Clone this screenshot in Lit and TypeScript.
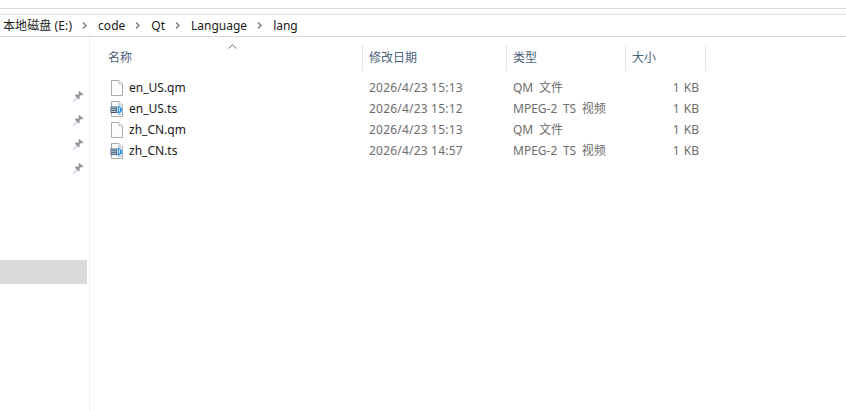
import { LitElement, html, css, unsafeCSS } from "lit";
import { customElement } from "lit/decorators.js";

const FONT = `"Noto Sans", "Noto Sans CJK SC", sans-serif`;

const chevron = html`<svg class="chev" width="5" height="7" viewBox="0 0 5 7"><path d="M1 0.5 L4 3.5 L1 6.5" fill="none" stroke="#7d7d7d" stroke-width="1.4"/></svg>`;

const pin = html`<svg class="pin" width="11" height="12" viewBox="0 0 11 12"><path d="M0.5 11.5 L4 7.5" stroke="#9aa3ab" stroke-width="1" fill="none"/><path d="M6.2 0.8 L10.4 4.6 L9 5.4 L7.8 5.1 L6.4 7 L6.6 8.8 L5.6 9.4 L1.8 5.6 L2.6 4.6 L4.4 4.8 L6 3.2 L5.6 2 Z" fill="#8e99a3"/></svg>`;

const fileIcon = html`<svg class="ficon" width="16" height="16" viewBox="0 0 16 16"><path d="M2.5 0.5 H10 L13.5 4 V15.5 H2.5 Z" fill="#fcfcfc" stroke="#ababab"/><path d="M10 0.5 V4 H13.5" fill="#f2f2f2" stroke="#c0c0c0"/></svg>`;

const videoIcon = html`<svg class="ficon" width="16" height="16" viewBox="0 0 16 16"><path d="M2.5 0.5 H10 L13.5 4 V15.5 H2.5 Z" fill="#fcfcfc" stroke="#ababab"/><path d="M10 0.5 V4 H13.5" fill="#f2f2f2" stroke="#c0c0c0"/><rect x="1.5" y="5.5" width="6.5" height="6.5" fill="#3f5b78"/><path d="M2.2 6.9 H7.4 M2.2 8.7 H7.4 M2.2 10.5 H7.4" stroke="#d5dfe8" stroke-width="0.8"/><path d="M8.6 4.2 L11.4 5.8 C13 7 13.4 9 12.6 10.6 C12 11.8 10.4 12.8 8.4 12.6 L8.8 8 Z" fill="#2a93e2"/><path d="M10.4 6.6 L10.4 10.4" stroke="#e8f4fd" stroke-width="1"/><path d="M9 13.5 H12.5" stroke="#9cc9ee" stroke-width="1"/></svg>`;

const files = [
  { name: "en_US.qm", date: "2026/4/23 15:13", type: "QM 文件", video: false },
  { name: "en_US.ts", date: "2026/4/23 15:12", type: "MPEG-2 TS 视频", video: true },
  { name: "zh_CN.qm", date: "2026/4/23 15:13", type: "QM 文件", video: false },
  { name: "zh_CN.ts", date: "2026/4/23 14:57", type: "MPEG-2 TS 视频", video: true },
];

@customElement("app-root")
export class AppRoot extends LitElement {
  static styles = css`
    :host {
      display: block;
      width: 846px;
      height: 411px;
      overflow: hidden;
      background: #fff;
      font-family: ${unsafeCSS(FONT)};
      font-size: 12px;
      color: #1a1a1a;
    }
    .win { display: flex; flex-direction: column; height: 411px; }
    .ribbon { height: 8px; border-bottom: 1px solid #d9d9d9; }
    .gap { height: 5px; border-bottom: 1px solid #d9d9d9; }
    .crumbs {
      height: 21px;
      border-bottom: 1px solid #d9d9d9;
      display: flex;
      align-items: center;
      padding-left: 3px;
      line-height: 21px;
      white-space: nowrap;
    }
    .crumb { display: block; }
    .root { letter-spacing: 0.1px; }
    .chev { margin: 0 11px 0 10px; flex: none; }
    .body { flex: 1; display: flex; min-height: 0; }
    .side {
      width: 89px;
      flex: none;
      border-right: 1px solid #f0f0f0;
      display: flex;
      flex-direction: column;
      align-items: flex-end;
    }
    .pins {
      margin-top: 53px;
      padding-right: 5px;
      display: flex;
      flex-direction: column;
      gap: 12px;
    }
    .pin { display: block; }
    .sel {
      margin-top: 86px;
      align-self: flex-start;
      width: 87px;
      height: 24px;
      background: #d9d9d9;
    }
    .main { flex: 1; position: relative; padding-left: 12px; }
    .sort { position: absolute; left: 138px; top: 7px; }
    .row {
      display: grid;
      grid-template-columns: 261px 144px 119px 80px;
    }
    .head { height: 26px; margin-top: 8px; margin-bottom: 6px; color: #4c607a; }
    .hc {
      border-right: 1px solid #e5e5e5;
      padding-left: 6px;
      line-height: 26px;
    }
    .file { height: 21px; line-height: 21px; color: #6d6d6d; }
    .name { display: flex; align-items: center; gap: 4px; padding-left: 7px; color: #1a1a1a; }
    .ficon { flex: none; }
    .c { padding-left: 6px; white-space: nowrap; }
    .date { letter-spacing: 0.2px; }
    .type { word-spacing: 2.5px; }
    .size { text-align: right; padding-right: 7px; word-spacing: 1px; }
  `;

  render() {
    return html`<div class="win">
      <div class="ribbon"></div>
      <div class="gap"></div>
      <div class="crumbs">
        <span class="crumb root">本地磁盘 (E:)</span>${chevron}
        <span class="crumb">code</span>${chevron}
        <span class="crumb">Qt</span>${chevron}
        <span class="crumb">Language</span>${chevron}
        <span class="crumb">lang</span>
      </div>
      <div class="body">
        <div class="side">
          <div class="pins">${pin}${pin}${pin}${pin}</div>
          <div class="sel"></div>
        </div>
        <div class="main">
          <svg class="sort" width="9" height="5" viewBox="0 0 9 5"><path d="M0.5 4.5 L4.5 0.8 L8.5 4.5" fill="none" stroke="#6f6f6f"/></svg>
          <div class="row head">
            <div class="hc">名称</div>
            <div class="hc">修改日期</div>
            <div class="hc">类型</div>
            <div class="hc">大小</div>
          </div>
          ${files.map(
            (f) => html`<div class="row file">
              <div class="name">${f.video ? videoIcon : fileIcon}<span>${f.name}</span></div>
              <div class="c date">${f.date}</div>
              <div class="c type">${f.type}</div>
              <div class="c size">1 KB</div>
            </div>`
          )}
        </div>
      </div>
    </div>`;
  }
}
